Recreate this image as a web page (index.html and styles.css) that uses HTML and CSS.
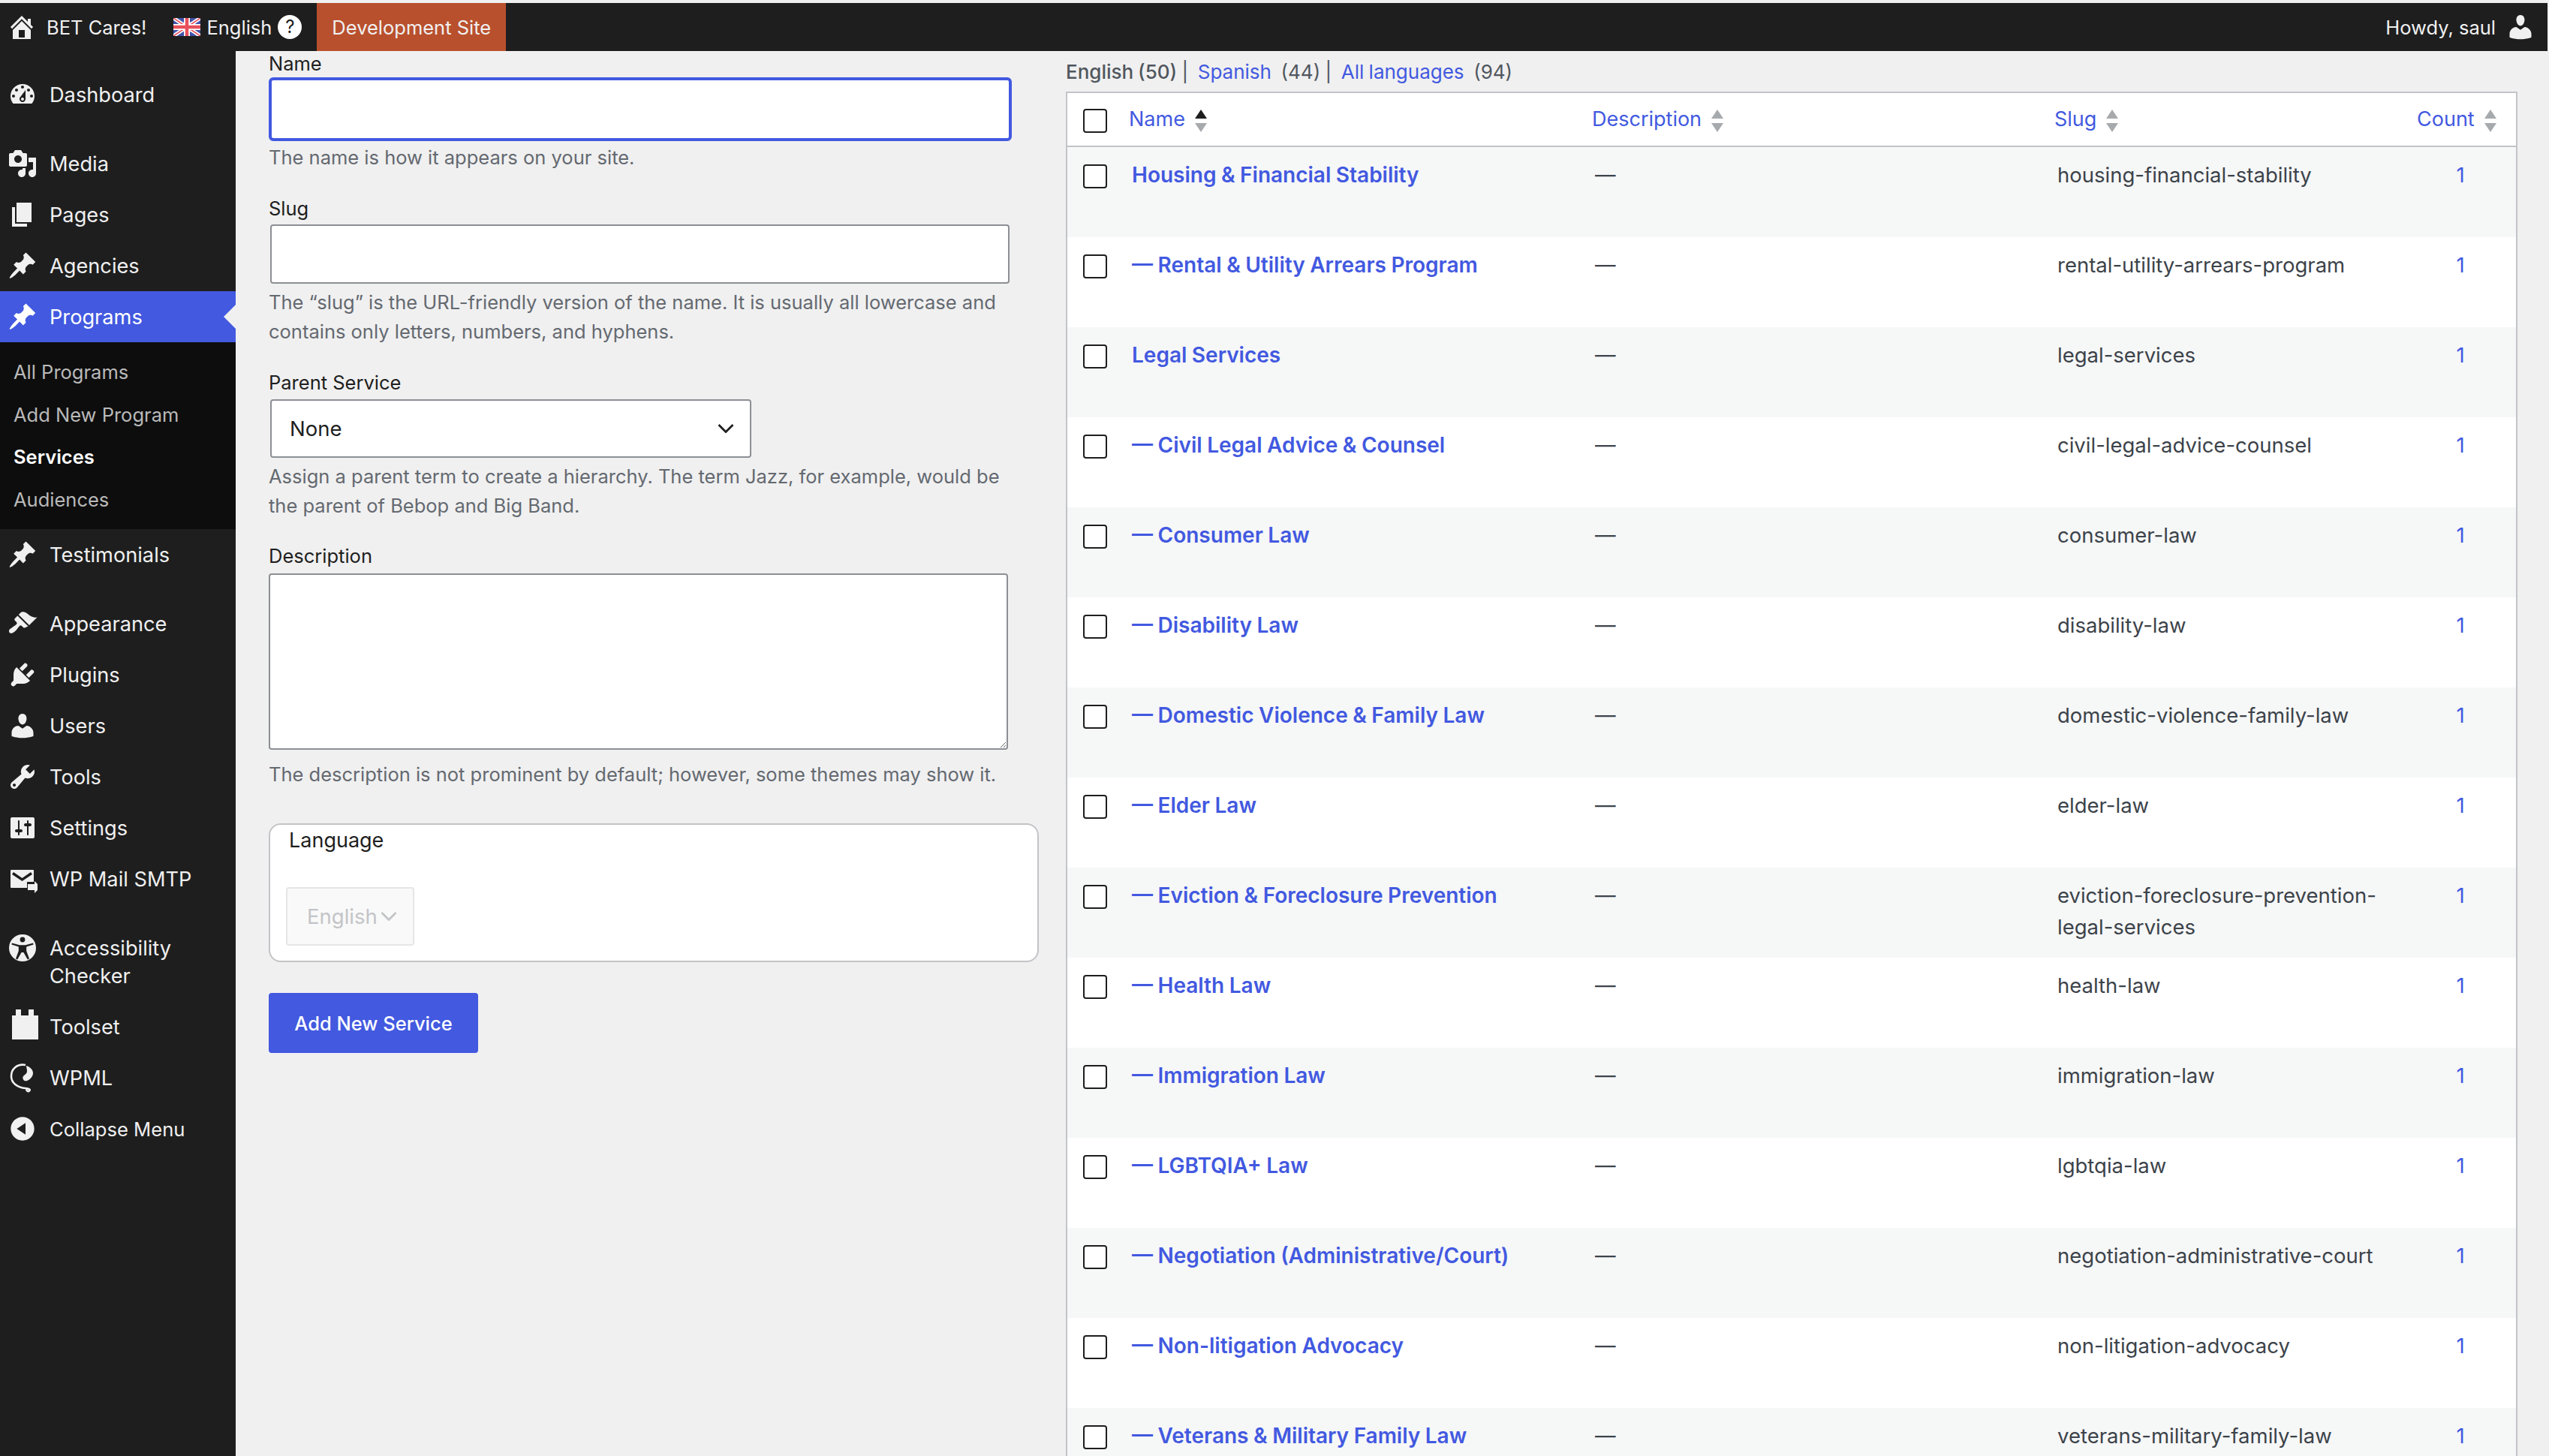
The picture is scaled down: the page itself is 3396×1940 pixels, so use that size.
FILE: index.html
```html
<!DOCTYPE html>
<html lang="en">
<head>
    <meta charset="UTF-8">
    <meta name="viewport" content="width=device-width, initial-scale=1.0">
    <title>Services</title>
    <link rel="stylesheet" href="styles.css">
</head>
<body>
    <svg class="defs" width="0" height="0">
        <symbol id="i-pin" viewBox="0 0 20 20"><path d="M10.44 3.02l1.82-1.82 6.36 6.35-1.83 1.82c-1.05-.68-2.48-.57-3.41.36l-.75.75c-.92.93-1.04 2.35-.35 3.41l-1.83 1.82-2.41-2.41-2.8 2.79c-.42.42-3.38 2.71-3.8 2.29s1.86-3.39 2.28-3.81l2.79-2.79L4.1 9.36l1.83-1.82c1.05.69 2.48.57 3.4-.36l.75-.75c.93-.92 1.05-2.35.36-3.41z"/></symbol>
        <symbol id="i-user" viewBox="0 0 20 20"><path d="M10 9.25c-2.27 0-2.73-3.44-2.73-3.44C7 4.02 7.82 2 9.97 2c2.16 0 2.98 2.02 2.71 3.81 0 0-.41 3.44-2.68 3.44zm0 2.57L12.72 10c2.39 0 4.52 2.33 4.52 4.53v2.49s-3.65 1.13-7.24 1.13c-3.65 0-7.24-1.13-7.24-1.13v-2.49c0-2.25 1.94-4.48 4.47-4.48z"/></symbol>
        <symbol id="i-sort" viewBox="0 0 16 30"><path d="M8 0l8 12H0z" fill="currentColor"/><path d="M8 30L0 18h16z"/></symbol>
        <symbol id="i-chevron" viewBox="0 0 22 12"><path d="M1.500 1l9.500 9.500L20.500 1" fill="none" stroke="currentColor" stroke-width="2.800"/></symbol>
    </svg>

    <header class="adminbar">
        <div class="bar-item">
            <svg class="bar-icon" viewBox="0 0 20 20"><path d="M16 8.500l1.530 1.530-1.060 1.060L10 4.620l-6.470 6.470-1.060-1.060L10 2.500l4 4v-2h2v4zm-6-2.460l6 5.990V18H4v-5.970zM12 17v-5H8v5h4z" fill-rule="evenodd"/></svg>
            <span>BET Cares!</span>
        </div>
        <div class="bar-item bar-lang">
            <svg class="flag" viewBox="0 0 36 24">
                <rect width="36" height="24" fill="#3f51a8"/>
                <path d="M0 0l36 24M36 0L0 24" stroke="#fff" stroke-width="5"/>
                <path d="M0 0l36 24M36 0L0 24" stroke="#e8505b" stroke-width="1.600"/>
                <path d="M18 0v24M0 12h36" stroke="#fff" stroke-width="8"/>
                <path d="M18 0v24M0 12h36" stroke="#e8505b" stroke-width="4.500"/>
            </svg>
            <span>English</span>
            <span class="help">?</span>
        </div>
        <div class="bar-dev">Development Site</div>
        <div class="bar-user">
            <span>Howdy, saul</span>
            <svg class="bar-icon" viewBox="0 0 20 20"><use href="#i-user"/></svg>
        </div>
    </header>

    <div class="page">
        <nav class="sidebar">
            <a class="menu-item">
                <svg class="menu-icon" viewBox="0 0 20 20"><path fill-rule="evenodd" d="M3.760 16h12.480c1.100-1.370 1.760-3.110 1.760-5 0-4.420-3.580-8-8-8s-8 3.580-8 8c0 1.890.660 3.630 1.760 5zM10 4c.550 0 1 .450 1 1s-.450 1-1 1-1-.450-1-1 .450-1 1-1zM6 6c.550 0 1 .450 1 1s-.450 1-1 1-1-.450-1-1 .450-1 1-1zm8 0c.550 0 1 .450 1 1s-.450 1-1 1-1-.450-1-1 .450-1 1-1zm-5.370 5.550L12 7v6c0 1.100-.900 2-2 2s-2-.900-2-2c0-.570.240-1.080.630-1.450zM4 10c.550 0 1 .450 1 1s-.450 1-1 1-1-.450-1-1 .450-1 1-1zm12 0c.550 0 1 .450 1 1s-.450 1-1 1-1-.450-1-1 .450-1 1-1zm-5 3c0-.550-.450-1-1-1s-1 .450-1 1 .450 1 1 1 1-.450 1-1z"/></svg>
                <span>Dashboard</span>
            </a>
            <div class="menu-sep"></div>
            <a class="menu-item">
                <svg class="menu-icon" viewBox="0 0 20 20"><path fill-rule="evenodd" d="M13 11V4c0-.550-.450-1-1-1h-1.670L9 1H5L3.670 3H2c-.550 0-1 .450-1 1v7c0 .550.450 1 1 1h10c.550 0 1-.450 1-1zM7 4.500c1.380 0 2.500 1.120 2.500 2.500S8.380 9.500 7 9.500 4.500 8.380 4.500 7 5.620 4.500 7 4.500zM14 6h5v10.500c0 1.380-1.120 2.500-2.500 2.500S14 17.880 14 16.500s1.120-2.500 2.500-2.500c.170 0 .340.020.500.050V9h-3V6zm-4 8.050V13h2v3.500c0 1.380-1.120 2.500-2.500 2.500S7 17.880 7 16.500 8.120 14 9.500 14c.170 0 .340.020.500.050z"/></svg>
                <span>Media</span>
            </a>
            <a class="menu-item">
                <svg class="menu-icon" viewBox="0 0 20 20"><path d="M6 15V2h10v13H6zm-1 1h8v2H3V5h2v11z"/></svg>
                <span>Pages</span>
            </a>
            <a class="menu-item">
                <svg class="menu-icon" viewBox="0 0 20 20"><use href="#i-pin"/></svg>
                <span>Agencies</span>
            </a>
            <a class="menu-item current">
                <svg class="menu-icon" viewBox="0 0 20 20"><use href="#i-pin"/></svg>
                <span>Programs</span>
            </a>
            <div class="submenu">
                <a class="sub-item">All Programs</a>
                <a class="sub-item">Add New Program</a>
                <a class="sub-item sub-current">Services</a>
                <a class="sub-item">Audiences</a>
            </div>
            <a class="menu-item">
                <svg class="menu-icon" viewBox="0 0 20 20"><use href="#i-pin"/></svg>
                <span>Testimonials</span>
            </a>
            <div class="menu-sep"></div>
            <a class="menu-item">
                <svg class="menu-icon" viewBox="0 0 20 20"><path d="M14.480 11.060L7.410 3.990l1.500-1.500c.500-.560 2.300-.470 3.510.320 1.210.800 1.430 1.280 2.910 2.100 1.180.640 2.450 1.260 4.450.850zm-.710.710L6.700 4.700 4.930 6.470c-.390.390-.390 1.020 0 1.410l1.060 1.060c.390.390.390 1.030 0 1.420-.600.600-1.430 1.110-2.210 1.690-.350.260-.700.530-1.010.840C1.430 13.230.400 14.960 1.430 16s2.760 0 4.090-1.330c.310-.310.580-.660.840-1.010.580-.780 1.090-1.610 1.690-2.210.390-.390 1.030-.390 1.420 0l1.060 1.060c.390.390 1.020.390 1.410 0z"/></svg>
                <span>Appearance</span>
            </a>
            <a class="menu-item">
                <svg class="menu-icon" viewBox="0 0 20 20"><path d="M13.110 4.360L9.870 7.600 8 5.730l3.240-3.240c.350-.340 1.050-.200 1.560.320.520.510.660 1.210.310 1.550zm-8 1.770l.910-1.120 9.010 9.010-1.190.840c-.710.710-2.630 1.160-3.820 1.160H6.140L4.900 17.260c-.590.590-1.540.590-2.120 0-.590-.580-.590-1.530 0-2.120l1.240-1.240v-3.880c0-1.130.400-3.190 1.090-3.890zm7.260 3.970l3.240-3.240c.340-.350 1.040-.210 1.550.310.520.510.660 1.210.310 1.550l-3.240 3.250z"/></svg>
                <span>Plugins</span>
            </a>
            <a class="menu-item">
                <svg class="menu-icon" viewBox="0 0 20 20"><use href="#i-user"/></svg>
                <span>Users</span>
            </a>
            <a class="menu-item">
                <svg class="menu-icon" viewBox="0 0 20 20"><path fill-rule="evenodd" d="M16.680 9.770c-1.340 1.340-3.300 1.670-4.950.990l-5.410 6.520c-.990.990-2.590.990-3.580 0s-.990-2.590 0-3.570l6.520-5.420c-.680-1.650-.350-3.610.990-4.950 1.280-1.280 3.120-1.620 4.720-1.060l-2.890 2.890 2.820 2.820 2.860-2.870c.530 1.580.180 3.390-1.080 4.650zM3.810 16.210c.400.390 1.040.390 1.430 0 .400-.400.400-1.040 0-1.430-.390-.400-1.030-.400-1.430 0-.390.390-.390 1.030 0 1.430z"/></svg>
                <span>Tools</span>
            </a>
            <a class="menu-item">
                <svg class="menu-icon" viewBox="0 0 20 20"><path fill-rule="evenodd" d="M18 16V4c0-.550-.450-1-1-1H3c-.550 0-1 .450-1 1v12c0 .550.450 1 1 1h14c.550 0 1-.450 1-1zM8 11h1c.550 0 1 .450 1 1s-.450 1-1 1H8v1.500c0 .280-.220.500-.500.500s-.500-.220-.500-.500V13H6c-.550 0-1-.450-1-1s.450-1 1-1h1V5.500c0-.280.220-.500.500-.500s.500.220.500.500V11zm5-2h-1c-.550 0-1-.450-1-1s.450-1 1-1h1V5.500c0-.280.220-.500.500-.500s.500.220.500.500V7h1c.550 0 1 .450 1 1s-.450 1-1 1h-1v5.500c0 .280-.220.500-.500.500s-.500-.220-.500-.500V9z"/></svg>
                <span>Settings</span>
            </a>
            <a class="menu-item">
                <svg class="menu-icon" viewBox="0 0 40 40"><path fill-rule="evenodd" d="M5 8h29c1 0 1 1 1 1v15h-9v8H5c-1 0-1-1-1-1V9c0-1 1-1 1-1zm3 3l-2 3 13.500 9L33 14l-2-3-11.500 8z"/><path d="M27 27h9v-4l8 8-8 8v-4h-9z"/></svg>
                <span>WP Mail SMTP</span>
            </a>
            <div class="menu-sep"></div>
            <a class="menu-item menu-two-line">
                <svg class="menu-icon" viewBox="0 0 40 40"><path fill-rule="evenodd" d="M20 2a18 18 0 1 1 0 36 18 18 0 0 1 0-36zm0 3.600a3.400 3.400 0 1 0 0 6.800 3.400 3.400 0 0 0 0-6.800zM6 13.500l-.6 2 9.400 3v5.500L11 34.600l2.200.8L18.600 26h2.800l5.400 9.400 2.200-.8L25.200 24v-5.500l9.400-3-.6-2-10 2.700h-8z"/></svg>
                <span>Accessibility Checker</span>
            </a>
            <a class="menu-item">
                <svg class="menu-icon menu-icon-open" viewBox="0 0 40 40"><path d="M6 5h5v-8h7v8h10v-8h7v8h6v32H6z"/></svg>
                <span>Toolset</span>
            </a>
            <a class="menu-item">
                <svg class="menu-icon" viewBox="0 0 40 40"><path d="M24 3C13 1 5 8 5 18c0 9 8 15 19 16 5 .5 7 2 5 3.500s-5-1-3-3" fill="none" stroke="currentColor" stroke-width="2.600"/><path d="M25 4c6 2 9 6 9 10 0 5-5 9-8 10-4 1.500-7-3-5-6 2-2.500 5-3 5-7 0-3-1-5-1-7z"/></svg>
                <span>WPML</span>
            </a>
            <a class="menu-item menu-collapse">
                <svg class="menu-icon" viewBox="0 0 20 20"><path fill-rule="evenodd" d="M10 2.160c4.330 0 7.840 3.510 7.840 7.840s-3.510 7.840-7.840 7.840S2.160 14.330 2.160 10 5.710 2.160 10 2.160zm2 11.720V6.120L6.180 9.970z"/></svg>
                <span>Collapse Menu</span>
            </a>
        </nav>

        <main class="content">
            <form class="term-form">
                <div class="field field-name">
                    <label class="field-label">Name</label>
                    <input class="text-input name-input" type="text">
                    <p class="hint">The name is how it appears on your site.</p>
                </div>
                <div class="field field-slug">
                    <label class="field-label">Slug</label>
                    <input class="text-input slug-input" type="text">
                    <p class="hint">The “slug” is the URL-friendly version of the name. It is usually all lowercase and contains only letters, numbers, and hyphens.</p>
                </div>
                <div class="field field-parent">
                    <label class="field-label">Parent Service</label>
                    <div class="select-wrap parent-select">
                        <select class="select-input"><option>None</option></select>
                        <svg class="chevron"><use href="#i-chevron"/></svg>
                    </div>
                    <p class="hint">Assign a parent term to create a hierarchy. The term Jazz, for example, would be the parent of Bebop and Big Band.</p>
                </div>
                <div class="field field-desc">
                    <label class="field-label">Description</label>
                    <textarea class="text-area"></textarea>
                    <p class="hint">The description is not prominent by default; however, some themes may show it.</p>
                </div>
                <div class="lang-box">
                    <div class="lang-title">Language</div>
                    <div class="select-wrap lang-select">
                        <select class="select-input" disabled><option>English</option></select>
                        <svg class="chevron"><use href="#i-chevron"/></svg>
                    </div>
                </div>
                <button class="submit-btn" type="button">Add New Service</button>
            </form>

            <section class="term-list">
                <div class="lang-filter">
                    <strong>English (50)</strong> | &nbsp;<a>Spanish</a> &nbsp;(44) | &nbsp;<a>All languages</a> &nbsp;(94)
                </div>
                <table class="terms">
                    <colgroup>
                        <col class="col-check">
                        <col class="col-name">
                        <col class="col-desc">
                        <col class="col-slug">
                        <col class="col-count">
                    </colgroup>
                    <thead>
                        <tr>
                            <th class="check-cell"><input type="checkbox" class="check"></th>
                            <th><a>Name</a><svg class="sort sort-asc"><use href="#i-sort"/></svg></th>
                            <th><a>Description</a><svg class="sort"><use href="#i-sort"/></svg></th>
                            <th><a>Slug</a><svg class="sort"><use href="#i-sort"/></svg></th>
                            <th class="count-head"><a>Count</a><svg class="sort"><use href="#i-sort"/></svg></th>
                        </tr>
                    </thead>
                    <tbody>
                        <tr><td class="check-cell"><input type="checkbox" class="check"></td><td><a class="term-name">Housing &amp; Financial Stability</a></td><td>—</td><td>housing-financial-stability</td><td class="count-cell"><a>1</a></td></tr>
                        <tr><td class="check-cell"><input type="checkbox" class="check"></td><td><a class="term-name">— Rental &amp; Utility Arrears Program</a></td><td>—</td><td>rental-utility-arrears-program</td><td class="count-cell"><a>1</a></td></tr>
                        <tr><td class="check-cell"><input type="checkbox" class="check"></td><td><a class="term-name">Legal Services</a></td><td>—</td><td>legal-services</td><td class="count-cell"><a>1</a></td></tr>
                        <tr><td class="check-cell"><input type="checkbox" class="check"></td><td><a class="term-name">— Civil Legal Advice &amp; Counsel</a></td><td>—</td><td>civil-legal-advice-counsel</td><td class="count-cell"><a>1</a></td></tr>
                        <tr><td class="check-cell"><input type="checkbox" class="check"></td><td><a class="term-name">— Consumer Law</a></td><td>—</td><td>consumer-law</td><td class="count-cell"><a>1</a></td></tr>
                        <tr><td class="check-cell"><input type="checkbox" class="check"></td><td><a class="term-name">— Disability Law</a></td><td>—</td><td>disability-law</td><td class="count-cell"><a>1</a></td></tr>
                        <tr><td class="check-cell"><input type="checkbox" class="check"></td><td><a class="term-name">— Domestic Violence &amp; Family Law</a></td><td>—</td><td>domestic-violence-family-law</td><td class="count-cell"><a>1</a></td></tr>
                        <tr><td class="check-cell"><input type="checkbox" class="check"></td><td><a class="term-name">— Elder Law</a></td><td>—</td><td>elder-law</td><td class="count-cell"><a>1</a></td></tr>
                        <tr><td class="check-cell"><input type="checkbox" class="check"></td><td><a class="term-name">— Eviction &amp; Foreclosure Prevention</a></td><td>—</td><td>eviction-foreclosure-prevention-legal-services</td><td class="count-cell"><a>1</a></td></tr>
                        <tr><td class="check-cell"><input type="checkbox" class="check"></td><td><a class="term-name">— Health Law</a></td><td>—</td><td>health-law</td><td class="count-cell"><a>1</a></td></tr>
                        <tr><td class="check-cell"><input type="checkbox" class="check"></td><td><a class="term-name">— Immigration Law</a></td><td>—</td><td>immigration-law</td><td class="count-cell"><a>1</a></td></tr>
                        <tr><td class="check-cell"><input type="checkbox" class="check"></td><td><a class="term-name">— LGBTQIA+ Law</a></td><td>—</td><td>lgbtqia-law</td><td class="count-cell"><a>1</a></td></tr>
                        <tr><td class="check-cell"><input type="checkbox" class="check"></td><td><a class="term-name">— Negotiation (Administrative/Court)</a></td><td>—</td><td>negotiation-administrative-court</td><td class="count-cell"><a>1</a></td></tr>
                        <tr><td class="check-cell"><input type="checkbox" class="check"></td><td><a class="term-name">— Non-litigation Advocacy</a></td><td>—</td><td>non-litigation-advocacy</td><td class="count-cell"><a>1</a></td></tr>
                        <tr><td class="check-cell"><input type="checkbox" class="check"></td><td><a class="term-name">— Veterans &amp; Military Family Law</a></td><td>—</td><td>veterans-military-family-law</td><td class="count-cell"><a>1</a></td></tr>
                    </tbody>
                </table>
            </section>
        </main>
    </div>
</body>
</html>
```

FILE: styles.css
```css
html, body {
    height: 100%;
}
body {
    margin: 0;
    padding: 4px 2px 0 0;
    box-sizing: border-box;
    height: 1940px;
    overflow: hidden;
    background: #f0f0f0;
    font-family: Inter, "Noto Sans", sans-serif;
    font-size: 25.5px;
    color: #3c434a;
}
a {
    color: #4259e0;
}
.defs {
    position: absolute;
}

/* top bar */
.adminbar {
    display: flex;
    align-items: center;
    height: 64px;
    background: #1e1e1e;
    color: #f0f0f1;
}
.bar-item {
    display: flex;
    align-items: center;
    gap: 13px;
    padding-left: 9px;
}
.bar-icon {
    flex: none;
    width: 40px;
    height: 40px;
    fill: currentColor;
}
.bar-lang {
    gap: 8px;
    padding-left: 36px;
}
.flag {
    width: 36px;
    height: 24px;
}
.help {
    width: 32px;
    height: 32px;
    border-radius: 50%;
    background: #fff;
    color: #1e1e1e;
    font-size: 24px;
    line-height: 32px;
    text-align: center;
}
.bar-dev {
    align-self: stretch;
    display: flex;
    align-items: center;
    margin-left: 20px;
    padding: 0 20px;
    background: #b9502d;
}
.bar-user {
    display: flex;
    align-items: center;
    gap: 13px;
    margin-left: auto;
    padding-right: 16px;
}

/* side menu */
.page {
    display: flex;
    height: 1872px;
}
.sidebar {
    flex: none;
    width: 314px;
    padding-top: 24px;
    box-sizing: border-box;
    background: #1e1e1e;
    color: #f0f0f1;
    font-size: 27.2px;
}
.menu-item {
    position: relative;
    display: flex;
    align-items: center;
    gap: 16px;
    min-height: 68px;
    padding-left: 10px;
    box-sizing: border-box;
    color: #f0f0f1;
    line-height: 37px;
}
.menu-icon {
    flex: none;
    width: 40px;
    height: 40px;
    fill: currentColor;
}
.menu-icon-open {
    overflow: visible;
}
.menu-sep {
    height: 24px;
}
.menu-two-line {
    align-items: flex-start;
    padding-top: 16px;
    padding-bottom: 15px;
}
.menu-two-line span {
    width: 220px;
}
.menu-two-line .menu-icon {
    margin-top: -2px;
}
.menu-collapse {
    font-size: 25.6px;
}
.current {
    background: #4259e0;
    color: #fff;
}
.current::after {
    content: "";
    position: absolute;
    right: 0;
    top: 50%;
    margin-top: -16px;
    border: 16px solid transparent;
    border-left-width: 0;
    border-right-color: #f0f0f0;
}
.submenu {
    padding: 12px 0 11px;
    background: #0d0d0d;
    font-size: 25.5px;
}
.sub-item {
    display: block;
    height: 56.5px;
    padding-left: 18px;
    color: #b9b9b9;
    line-height: 56.5px;
}
.sub-current {
    color: #fff;
    font-weight: 600;
}

/* page content */
.content {
    flex: 1;
    display: flex;
    gap: 36px;
    min-width: 0;
    padding-left: 44px;
}
.term-form {
    flex: none;
    width: 1026px;
}
.field {
    margin-bottom: 29px;
}
.field-label {
    display: block;
    height: 39px;
    color: #1e1e1e;
    line-height: 35px;
}
.field-name {
    margin-bottom: 32px;
}
.field-name .field-label {
    height: 35px;
    line-height: 34px;
}
.field-name .hint {
    margin-top: 2px;
}
.field-slug {
    margin-bottom: 32px;
}
.field-parent {
    margin-bottom: 31px;
}
.field-desc .hint {
    margin-top: 13px;
}
.hint {
    width: 1000px;
    margin: 5px 0 -1px;
    color: #646970;
    line-height: 39px;
}
.text-input {
    display: block;
    width: 985px;
    height: 79px;
    margin-left: 2px;
    padding: 0 16px;
    box-sizing: border-box;
    border: 2px solid #8c8f94;
    border-radius: 4px;
    background: #fff;
}
.name-input {
    width: 990px;
    height: 85px;
    margin-left: 0;
    border: 4px solid #4259e0;
    border-radius: 6px;
}
.select-wrap {
    position: relative;
}
.select-input {
    display: block;
    width: 100%;
    height: 100%;
    padding: 0 24px;
    box-sizing: border-box;
    appearance: none;
    border: 2px solid #8c8f94;
    border-radius: 4px;
    background: #fff;
    color: #1e1e1e;
    font: inherit;
    font-size: 27.5px;
}
.chevron {
    position: absolute;
    top: 50%;
    right: 23px;
    width: 22px;
    height: 12px;
    margin-top: -6px;
    color: #1e1e1e;
}
.parent-select {
    width: 641px;
    height: 78px;
    margin-top: 1px;
    margin-left: 2px;
}
.text-area {
    display: block;
    width: 985px;
    height: 235px;
    margin-top: 2px;
    box-sizing: border-box;
    border: 2px solid #8c8f94;
    border-radius: 4px;
    background: #fff;
}
.lang-box {
    height: 185px;
    margin-top: 47px;
    padding: 3px 25px 0;
    box-sizing: border-box;
    border: 2px solid #c3c4c7;
    border-radius: 16px;
    background: #fff;
    color: #1e1e1e;
    font-size: 27px;
}
.lang-title {
    height: 80px;
    line-height: 36px;
}
.lang-select {
    width: 171px;
    height: 78px;
    margin-left: -4px;
}
.lang-select .select-input {
    padding: 0 26px;
    border: 2px solid #e6e6e6;
    background: #f9f9f9;
    color: #c3c4c7;
    opacity: 1;
}
.lang-select .chevron {
    right: 23px;
    color: #c3c4c7;
}
.submit-btn {
    display: block;
    width: 279px;
    height: 80px;
    margin-top: 41px;
    border: 0;
    border-radius: 4px;
    background: #4259e0;
    color: #fff;
    font: 500 25.5px Inter, "Noto Sans", sans-serif;
}

/* terms table */
.term-list {
    width: 1934px;
}
.lang-filter {
    height: 46px;
    padding-top: 8px;
    color: #50575e;
    line-height: 39px;
    font-size: 26px;
    word-spacing: -1px;
}
.lang-filter strong {
    font-weight: 500;
}
.terms {
    width: 100%;
    table-layout: fixed;
    border-collapse: separate;
    border-spacing: 0;
    border: 2px solid #c3c4c7;
    background: #fff;
    font-size: 27.5px;
    line-height: 42px;
}
.col-check {
    width: 75px;
}
.col-desc {
    width: 616px;
}
.col-slug {
    width: 474px;
}
.col-count {
    width: 148px;
}
.terms th {
    height: 72px;
    padding: 0 0 0 7px;
    box-sizing: border-box;
    border-bottom: 2px solid #c3c4c7;
    font-size: 27px;
    font-weight: 400;
    text-align: left;
    white-space: nowrap;
}
.terms td {
    height: 120px;
    padding: 16px 11px 0;
    box-sizing: border-box;
    vertical-align: top;
}
.terms tbody tr:nth-child(odd) {
    background: #f6f7f7;
}
.terms .check-cell {
    padding: 0 0 0 21px;
}
.terms th.check-cell {
    padding-top: 4px;
}
.terms td.check-cell {
    padding-top: 23px;
}
.check {
    display: block;
    width: 32px;
    height: 32px;
    margin: 0;
    appearance: none;
    border: 2px solid #1e1e1e;
    border-radius: 4px;
    background: #fff;
}
.term-name {
    font-weight: 600;
    font-size: 28px;
    word-spacing: -0.5px;
}
.sort {
    width: 16px;
    height: 30px;
    margin-left: 13px;
    vertical-align: middle;
    fill: #a7aaad;
    color: #a7aaad;
}
.sort-asc {
    color: #1e1e1e;
}
.terms .count-head {
    padding-left: 16px;
}
.count-cell {
    text-align: center;
}
```
